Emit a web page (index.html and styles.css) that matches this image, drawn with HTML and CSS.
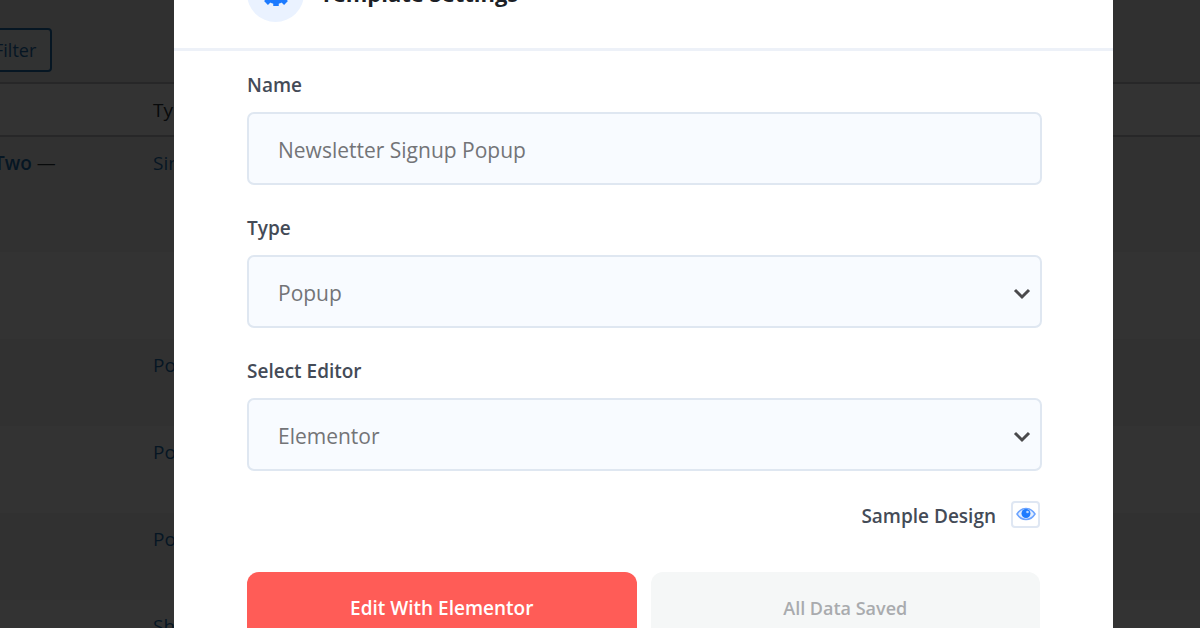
FILE: index.html
```html
<!DOCTYPE html>
<html lang="en">
  <head>
    <meta charset="UTF-8" />
    <meta name="viewport" content="width=device-width, initial-scale=1.0" />
    <title>Template Settings</title>
    <link rel="stylesheet" href="styles.css">
  </head>
  <body>
    <div class="wrap">
      <div class="tablenav">
        <button type="button" class="filter-btn">Filter</button>
      </div>
      <table class="list-table">
        <thead>
          <tr>
            <th class="col-title"></th>
            <th>Type</th>
          </tr>
        </thead>
        <tbody>
          <tr class="tall">
            <td><a href="#"><b>Two</b></a> —</td>
            <td><a href="#">Single</a></td>
          </tr>
          <tr>
            <td></td>
            <td></td>
          </tr>
          <tr>
            <td></td>
            <td><a href="#">Popup</a></td>
          </tr>
          <tr>
            <td></td>
            <td><a href="#">Popup</a></td>
          </tr>
          <tr>
            <td></td>
            <td><a href="#">Popup</a></td>
          </tr>
          <tr>
            <td></td>
            <td><a href="#">Shop</a></td>
          </tr>
        </tbody>
      </table>
    </div>

    <!-- popup -->
    <div class="overlay">
      <form class="modal">
        <div class="modal-header">
          <span class="modal-icon">
            <svg width="28" height="28" viewBox="0 0 28 28" fill="none" stroke="#1d7bff">
              <circle cx="14" cy="14" r="7.500" stroke-width="7" />
              <path d="M14 1v5M14 22v5M1 14h5M22 14h5M4 4l3.500 3.500M20.500 20.500l3.500 3.500M4 24l3.500-3.500M20.500 7.500l3.500-3.500" stroke-width="5.500" />
            </svg>
          </span>
          <h2>Template Settings</h2>
        </div>

        <div class="modal-body">
          <div class="field">
            <label for="name">Name</label>
            <input type="text" name="name" id="name" value="Newsletter Signup Popup" />
          </div>

          <div class="field">
            <label for="type">Type</label>
            <div class="select-box">
              <select name="type" id="type">
                <option>Popup</option>
              </select>
              <svg class="arrow" width="18" height="12" viewBox="0 0 18 12"><path d="M2 2l7 7 7-7" /></svg>
            </div>
          </div>

          <div class="field">
            <label for="editor">Select Editor</label>
            <div class="select-box">
              <select name="editor" id="editor">
                <option>Elementor</option>
              </select>
              <svg class="arrow" width="18" height="12" viewBox="0 0 18 12"><path d="M2 2l7 7 7-7" /></svg>
            </div>
          </div>

          <div class="sample">
            <span id="sample-text">Sample Design</span>
            <button type="button" class="eye-btn" aria-labelledby="sample-text">
              <svg width="20" height="14" viewBox="0 0 20 14">
                <path d="M1 7C3.500 3 6.500 1.500 10 1.500S16.500 3 19 7c-2.500 4-5.500 5.500-9 5.500S3.500 11 1 7z" fill="#e3eeff" stroke="#6ba3ff" stroke-width="1.500" />
                <circle cx="10" cy="6.500" r="4.500" fill="#1d7bff" />
                <circle cx="11.500" cy="5" r="1.300" fill="#b9d6ff" />
              </svg>
            </button>
          </div>

          <div class="buttons">
            <button type="submit" class="edit-btn">Edit With Elementor</button>
            <button type="button" class="saved-btn">All Data Saved</button>
          </div>
        </div>
      </form>
    </div>
  </body>
</html>
```
FILE: styles.css
```css
* {
  box-sizing: border-box;
}

body {
  margin: 0;
  height: 100vh;
  overflow: hidden;
  background-color: #f0f0f1;
  font-family: "Open Sans", "Noto Sans", sans-serif;
  font-size: 19px;
  color: #2c3338;
}

button,
input,
select {
  font-family: inherit;
}

/* template list */
.wrap {
  margin-left: -24px;
}

.tablenav {
  padding: 28px 0 10px;
}

.filter-btn {
  display: block;
  height: 44px;
  padding: 0 14px 0 16px;
  border: 2px solid #2271b1;
  border-radius: 4px;
  background: #f6f7f7;
  color: #2271b1;
  font-size: 18px;
}

.list-table {
  width: 100%;
  border-collapse: collapse;
  table-layout: fixed;
  border-top: 2px solid #c3c4c7;
  background: white;
}

.list-table th {
  height: 53px;
  padding: 0;
  border-bottom: 2px solid #c3c4c7;
  text-align: left;
  font-weight: normal;
}

.list-table .col-title {
  width: 177px;
}

.list-table td {
  height: 87px;
  padding: 13px 0 0;
  vertical-align: top;
  line-height: 26px;
}

.list-table td:first-child {
  padding-left: 18px;
}

.list-table .tall td {
  height: 116px;
}

.list-table tbody tr:nth-child(odd) {
  background: #f6f6f6;
}

.list-table a {
  color: #2271b1;
  text-decoration: none;
}

.list-table b {
  font-weight: 600;
}

/* popup */
.overlay {
  position: fixed;
  inset: 0;
  display: flex;
  align-items: center;
  justify-content: center;
  padding-left: 87px;
  overflow: hidden;
  background: rgba(0, 0, 0, 0.8);
}

.modal {
  width: 100%;
  max-width: 939px;
  background: white;
}

.modal-header {
  display: flex;
  align-items: center;
  gap: 16px;
  padding: 26px 73px;
  border-bottom: 3px solid #edf1f8;
}

.modal-icon {
  display: flex;
  align-items: center;
  justify-content: center;
  width: 57px;
  height: 57px;
  border-radius: 50%;
  background: #eaf2ff;
}

.modal-header h2 {
  margin: 0;
  font-size: 22px;
  color: #1c1f26;
}

.modal-body {
  padding: 21px 73px 46px;
}

.field {
  margin: 0 -2px 30px 0;
}

.field label {
  display: block;
  margin-bottom: 14px;
  line-height: 26px;
  font-weight: 600;
  color: #444b57;
}

.field input,
.field select {
  display: block;
  width: 100%;
  height: 73px;
  padding: 4px 29px 0;
  border: 2px solid #dfe7f1;
  border-radius: 7px;
  outline: none;
  background: #f8fbff;
  color: #737477;
  font-size: 21px;
}

.field select {
  appearance: none;
}

.select-box {
  position: relative;
}

.arrow {
  position: absolute;
  right: 11px;
  top: 33px;
  fill: none;
  stroke: #4a4a4c;
  stroke-width: 3;
  pointer-events: none;
}

.sample {
  display: flex;
  align-items: flex-start;
  justify-content: flex-end;
  gap: 15px;
  line-height: 30px;
  font-weight: 600;
  color: #444b57;
}

.eye-btn {
  display: flex;
  align-items: center;
  justify-content: center;
  width: 29px;
  height: 27px;
  padding: 0;
  border: 2px solid #dfe7f3;
  border-radius: 4px;
  background: white;
}

.buttons {
  display: flex;
  gap: 14px;
  margin-top: 41px;
}

.buttons button {
  flex: 1;
  height: 72px;
  border: none;
  border-radius: 12px;
  font-size: 19px;
  font-weight: 600;
}

.buttons .edit-btn {
  background: #ff5c57;
  color: white;
}

.buttons .saved-btn {
  background: #f5f7f7;
  color: #a9abae;
  font-size: 18px;
}
```
